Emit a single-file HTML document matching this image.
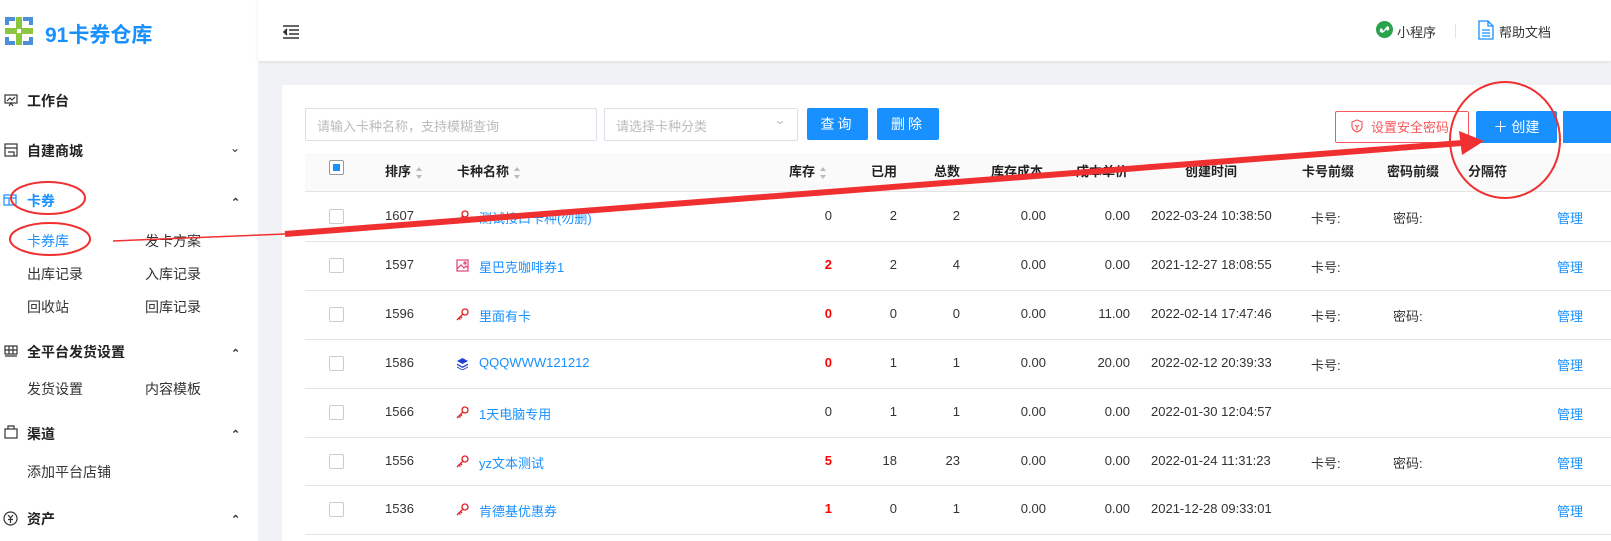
<!DOCTYPE html>
<html><head><meta charset="utf-8"><style>
*{margin:0;padding:0;box-sizing:border-box}
body{width:1611px;height:541px;overflow:hidden;background:#f0f2f5;font-family:"Liberation Sans","Noto Sans CJK SC",sans-serif;position:relative;color:#333}
.a{position:absolute;white-space:nowrap}
#side{left:0;top:0;width:258px;height:541px;background:#fff}
#hdr{left:258px;top:0;width:1353px;height:61px;background:#fff;box-shadow:0 1px 4px rgba(0,0,0,.08)}
#card{left:282px;top:85px;width:1329px;height:456px;background:#fff}
.m{font-size:14px;font-weight:bold;color:#222}
.s{font-size:14px;color:#333}
.t{font-size:13px;color:#333}
.th{font-size:13px;font-weight:bold;color:#222}
.r{text-align:right}
.ln{position:absolute;left:305px;width:1306px;height:1px;background:#e4e4e4}
.cb{position:absolute;left:329px;width:15px;height:15px;border:1px solid #ccc;border-radius:2px;background:#fff}
.nm{color:#1890ff;font-size:13px}
.red{color:#f00;font-weight:bold}
.srt{display:inline-block;vertical-align:middle;margin-left:5px;width:7px;height:12px;position:relative}
.srt:before{content:"";position:absolute;top:0;left:0;border:3.5px solid transparent;border-bottom:4px solid #bbb;border-top:0}
.srt:after{content:"";position:absolute;bottom:0;left:0;border:3.5px solid transparent;border-top:4px solid #bbb;border-bottom:0}
</style></head><body>
<div id="side" class="a"></div>
<div id="hdr" class="a"></div>
<div id="card" class="a"></div>

<svg class="a" style="left:3px;top:15px" width="32" height="32" viewBox="0 0 32 32">
<rect x="0" y="0" width="32" height="32" fill="#fff"/>
<path d="M2 2h10v4H6v4H2z M20 2h10v8h-4V6h-6z M2 22h4v4h6v4H2z M26 22h4v8H20v-4h6z" fill="#4a90d9"/>
<path d="M13 2h6v11h11v6H19v11h-6V19H2v-6h11z" fill="#8cc63f"/>
<rect x="14" y="14" width="4" height="4" fill="#fff"/>
</svg>
<div class="a" style="left:45px;top:19px;font-size:21px;font-weight:bold;color:#1890ff">91卡券仓库</div>

<svg class="a" style="left:4px;top:93px" width="14" height="14" viewBox="0 0 14 14" fill="none" stroke="#333" stroke-width="1.2"><rect x="1" y="2" width="12" height="8"/><path d="M3 8l3-3 2 2 3-3M5 13l2-3 2 3"/></svg>
<div class="a m" style="left:27px;top:91px">工作台</div>
<svg class="a" style="left:4px;top:143px" width="14" height="14" viewBox="0 0 14 14" fill="none" stroke="#333" stroke-width="1.2"><rect x="1" y="1" width="12" height="12"/><path d="M1 5h12M4 9h6v4"/></svg>
<div class="a m" style="left:27px;top:141px">自建商城</div>
<div class="a" style="left:230px;top:141px;font-size:12px;color:#333">&#8964;</div>
<svg class="a" style="left:3px;top:194px" width="14" height="12" viewBox="0 0 14 12" fill="none" stroke="#1890ff" stroke-width="1.2"><rect x="1" y="1" width="12" height="10"/><path d="M1 4h12M6 4v7"/></svg>
<div class="a m" style="left:27px;top:191px;color:#1890ff">卡券</div>
<div class="a" style="left:231px;top:196px;font-size:11px;font-weight:bold">&#8963;</div>
<div class="a s" style="left:27px;top:231px;color:#1890ff">卡券库</div>
<div class="a s" style="left:145px;top:231px">发卡方案</div>
<div class="a s" style="left:27px;top:264px">出库记录</div>
<div class="a s" style="left:145px;top:264px">入库记录</div>
<div class="a s" style="left:27px;top:297px">回收站</div>
<div class="a s" style="left:145px;top:297px">回库记录</div>
<svg class="a" style="left:4px;top:345px" width="14" height="12" viewBox="0 0 14 12" fill="none" stroke="#333" stroke-width="1.2"><rect x="1" y="1" width="12" height="8"/><path d="M1 5h12M5 1v8M9 1v8M1 11h12"/></svg>
<div class="a m" style="left:27px;top:342px">全平台发货设置</div>
<div class="a" style="left:231px;top:347px;font-size:11px;font-weight:bold">&#8963;</div>
<div class="a s" style="left:27px;top:379px">发货设置</div>
<div class="a s" style="left:145px;top:379px">内容模板</div>
<svg class="a" style="left:4px;top:425px" width="14" height="14" viewBox="0 0 14 14" fill="none" stroke="#333" stroke-width="1.2"><rect x="1" y="4" width="12" height="9"/><path d="M4 4V1h6v3"/></svg>
<div class="a m" style="left:27px;top:424px">渠道</div>
<div class="a" style="left:231px;top:428px;font-size:11px;font-weight:bold">&#8963;</div>
<div class="a s" style="left:27px;top:462px">添加平台店铺</div>
<svg class="a" style="left:3px;top:511px" width="15" height="15" viewBox="0 0 15 15" fill="none" stroke="#333" stroke-width="1.2"><circle cx="7.5" cy="7.5" r="6.5"/><path d="M5 4l2.5 3 2.5-3M7.5 7v5M5 8.5h5"/></svg>
<div class="a m" style="left:27px;top:509px">资产</div>
<div class="a" style="left:231px;top:513px;font-size:11px;font-weight:bold">&#8963;</div>

<svg class="a" style="left:282px;top:25px" width="18" height="14" viewBox="0 0 18 14" fill="none" stroke="#333" stroke-width="1.6"><path d="M1 1h16M7 5h10M7 9h10M1 13h16"/><path d="M5 4L2 7l3 3" fill="#333"/></svg>
<svg class="a" style="left:1376px;top:21px" width="17" height="17" viewBox="0 0 17 17"><circle cx="8.5" cy="8.5" r="8.5" fill="#2ba24c"/><path d="M6 11c-2 0-2-3 0-3M6 8v3M11 6c2 0 2 3 0 3M11 9V6M6 11c2 0 5-5 5-5" stroke="#fff" stroke-width="1.4" fill="none"/></svg>
<div class="a" style="left:1397px;top:22px;font-size:13px">小程序</div>
<div class="a" style="left:1455px;top:24px;width:1px;height:14px;background:#e4e4e4"></div>
<svg class="a" style="left:1478px;top:20px" width="16" height="20" viewBox="0 0 16 20" fill="none" stroke="#1890ff" stroke-width="1.3"><path d="M1 1h9l5 5v13H1z M10 1v5h5 M4 10h8M4 13h8M4 16h8"/></svg>
<div class="a" style="left:1499px;top:22px;font-size:13px">帮助文档</div>

<div class="a" style="left:305px;top:108px;width:292px;height:33px;border:1px solid #dcdfe6;border-radius:2px"></div>
<div class="a" style="left:317px;top:116px;font-size:13px;color:#bbb">请输入卡种名称，支持模糊查询</div>
<div class="a" style="left:604px;top:108px;width:194px;height:33px;border:1px solid #dcdfe6;border-radius:2px"></div>
<div class="a" style="left:616px;top:116px;font-size:13px;color:#bbb">请选择卡种分类</div>
<div class="a" style="left:775px;top:113px;font-size:12px;color:#bbb;transform:scaleX(1.3)">&#8964;</div>
<div class="a" style="left:807px;top:108px;width:61px;height:32px;background:#1890ff;border-radius:2px;color:#fff;font-size:14px;text-align:center;line-height:32px;letter-spacing:3px">查询</div>
<div class="a" style="left:877px;top:108px;width:62px;height:32px;background:#1890ff;border-radius:2px;color:#fff;font-size:14px;text-align:center;line-height:32px;letter-spacing:3px">删除</div>
<div class="a" style="left:1335px;top:111px;width:134px;height:32px;border:1px solid #f5595b;border-radius:2px"></div>
<svg class="a" style="left:1351px;top:119px" width="12" height="14" viewBox="0 0 12 14" fill="none" stroke="#f5595b" stroke-width="1.2"><path d="M6 1l5 2v4c0 3-2 5-5 6-3-1-5-3-5-6V3z M4 6l2 2 2-2M6 8v3"/></svg>
<div class="a" style="left:1371px;top:117px;font-size:13px;color:#f5595b">设置安全密码</div>
<div class="a" style="left:1476px;top:111px;width:81px;height:32px;background:#1890ff;border-radius:2px;color:#fff;font-size:14px;line-height:32px;text-align:center">＋ 创建</div>
<div class="a" style="left:1563px;top:111px;width:60px;height:32px;background:#1890ff"></div>

<div class="a" style="left:305px;top:153px;width:1306px;height:38px;background:#fafafa"></div>
<div class="cb" style="top:160px;border-color:#999"></div>
<div class="a" style="left:333px;top:164px;width:7px;height:7px;background:#1890ff"></div>
<div class="a th" style="left:385px;top:161px">排序<span class="srt"></span></div>
<div class="a th" style="left:457px;top:161px">卡种名称<span class="srt"></span></div>
<div class="a th" style="left:789px;top:161px">库存<span class="srt"></span></div>
<div class="a th" style="left:871px;top:161px">已用</div>
<div class="a th" style="left:934px;top:161px">总数</div>
<div class="a th" style="left:991px;top:161px">库存成本</div>
<div class="a th" style="left:1076px;top:161px">成本单价</div>
<div class="a th" style="left:1185px;top:161px">创建时间</div>
<div class="a th" style="left:1302px;top:161px">卡号前缀</div>
<div class="a th" style="left:1387px;top:161px">密码前缀</div>
<div class="a th" style="left:1468px;top:161px">分隔符</div>
<div class="ln" style="top:191px"></div>

<div id="rows"></div>
<script>
var d=[["1607","k","测试接口卡种(勿删)","0",0,"2","2","0.00","0.00","2022-03-24 10:38:50","卡号:","密码:"],
["1597","p","星巴克咖啡券1","2",1,"2","4","0.00","0.00","2021-12-27 18:08:55","卡号:",""],
["1596","k","里面有卡","0",1,"0","0","0.00","11.00","2022-02-14 17:47:46","卡号:","密码:"],
["1586","l","QQQWWW121212","0",1,"1","1","0.00","20.00","2022-02-12 20:39:33","卡号:",""],
["1566","k","1天电脑专用","0",0,"1","1","0.00","0.00","2022-01-30 12:04:57","",""],
["1556","k","yz文本测试","5",1,"18","23","0.00","0.00","2022-01-24 11:31:23","卡号:","密码:"],
["1536","k","肯德基优惠券","1",1,"0","1","0.00","0.00","2021-12-28 09:33:01","",""]];
var ic={k:'<svg width="13" height="13" viewBox="0 0 13 13" fill="none" stroke="#e02020" stroke-width="1.3"><circle cx="9" cy="4" r="3"/><path d="M7 6L1 12M3 10l1.5 1.5M4.5 8.5L6 10"/></svg>',
p:'<svg width="13" height="13" viewBox="0 0 13 13" fill="none" stroke="#e0407a" stroke-width="1.2"><rect x="1" y="1" width="11" height="11"/><path d="M1 10l4-4 3 3 2-2 2 2"/><circle cx="9" cy="4" r="1"/></svg>',
l:'<svg width="13" height="13" viewBox="0 0 13 13" fill="#2540d0"><path d="M6.5 1L12 4 6.5 7 1 4z M1 6.5l5.5 3 5.5-3v1.5l-5.5 3-5.5-3z M1 9.5l5.5 3 5.5-3v1l-5.5 3-5.5-3z"/></svg>'};
var h='';
d.forEach(function(r,i){var y=192+i*48.9,ty=y+16;
h+='<div class="cb" style="top:'+(y+17)+'px"></div>';
h+='<div class="a t" style="left:385px;top:'+ty+'px">'+r[0]+'</div>';
h+='<div class="a" style="left:456px;top:'+(ty+2)+'px">'+ic[r[1]]+'</div>';
h+='<div class="a nm" style="left:479px;top:'+ty+'px">'+r[2]+'</div>';
h+='<div class="a t r'+(r[4]?' red':'')+'" style="left:782px;width:50px;top:'+ty+'px">'+r[3]+'</div>';
h+='<div class="a t r" style="left:847px;width:50px;top:'+ty+'px">'+r[5]+'</div>';
h+='<div class="a t r" style="left:910px;width:50px;top:'+ty+'px">'+r[6]+'</div>';
h+='<div class="a t r" style="left:986px;width:60px;top:'+ty+'px">'+r[7]+'</div>';
h+='<div class="a t r" style="left:1070px;width:60px;top:'+ty+'px">'+r[8]+'</div>';
h+='<div class="a t" style="left:1151px;top:'+ty+'px">'+r[9]+'</div>';
h+='<div class="a t" style="left:1311px;top:'+ty+'px">'+r[10]+'</div>';
h+='<div class="a t" style="left:1393px;top:'+ty+'px">'+r[11]+'</div>';
h+='<div class="a nm" style="left:1557px;top:'+ty+'px">管理</div>';
h+='<div class="ln" style="top:'+Math.round(y+48.9)+'px"></div>';});
document.getElementById('rows').outerHTML=h;
</script>

<svg class="a" style="left:0;top:0" width="1611" height="541" viewBox="0 0 1611 541" fill="none" stroke="#f03030">
<ellipse cx="48" cy="198" rx="37" ry="16" stroke-width="2"/>
<ellipse cx="50" cy="239" rx="40" ry="16" stroke-width="2"/>
<path d="M113 241L285 234" stroke-width="1.5"/>
<path d="M285 234L1462 143" stroke-width="6"/>
<path d="M1459 131L1484 141L1462 155Z" fill="#f03030" stroke="none"/>
<ellipse cx="1505" cy="140" rx="55" ry="58" stroke-width="2"/>
</svg>
</body></html>
